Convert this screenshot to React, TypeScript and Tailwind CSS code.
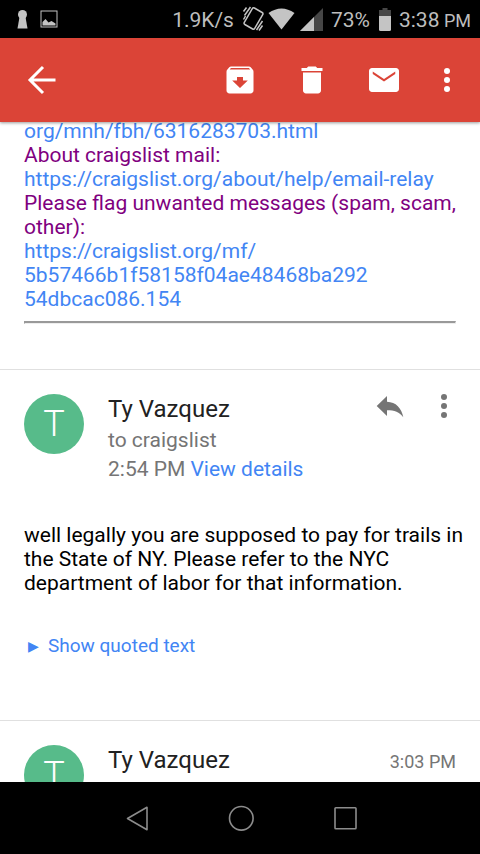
import type { ReactNode } from "react";

function StatusBar() {
  return (
    <div className="flex h-[38px] shrink-0 items-center bg-black pr-[9px] pl-4 text-[21px] text-[#bdbdbd]">
      <div className="flex items-center gap-3">
        <svg width="12" height="20" viewBox="0 0 12 20" fill="#c4c4c4" aria-hidden="true">
          <circle cx="6.500" cy="5.500" r="4.500" />
          <path d="M3.500 8h6l2 11.500h-10z" />
        </svg>
        <svg width="18" height="18" viewBox="0 0 18 18" aria-hidden="true">
          <rect x="1" y="1" width="16" height="16" fill="none" stroke="#c4c4c4" />
          <path d="M2.500 15.500v-3.500l3-3 3 3.500 3-1.500 4 2.500v2z" fill="#c4c4c4" />
        </svg>
      </div>
      <div className="ml-auto flex items-center">
        <span className="pt-[3px]">1.9K/s</span>
        <svg className="ml-2" width="24" height="28" viewBox="0 0 24 28" fill="none" stroke="#c4c4c4" strokeWidth="1.500" aria-hidden="true">
          <rect x="5.500" y="4" width="12" height="19" rx="1.500" transform="rotate(30 11.500 13.500)" />
          <path d="M8.500 2 2.500 10.500M4.500 2.500 1.500 6.500M3.500 11 1.500 14.500M20.500 16 14.500 25M20.500 20.500 17 25.500" />
        </svg>
        <svg className="ml-[2px]" width="27" height="22" viewBox="0 0 27 22" fill="#c4c4c4" aria-hidden="true">
          <path d="M13.500 21.500.5 5Q13.500-4 26.500 5z" />
        </svg>
        <svg className="ml-[5px]" width="23" height="23" viewBox="0 0 23 23" aria-hidden="true">
          <path d="M0 23 23 0v23z" fill="#464646" />
          <path d="M0 23 14 9v14z" fill="#c4c4c4" />
        </svg>
        <span className="ml-2 pt-[3px]">73%</span>
        <svg className="ml-[9px]" width="12" height="23" viewBox="0 0 12 23" aria-hidden="true">
          <path d="M3.500 0h5v2H12v6H0V2h3.500z" fill="#464646" />
          <path d="M0 8h12v13.500q0 1.500-1.500 1.500h-9Q0 23 0 21.500z" fill="#c4c4c4" />
        </svg>
        <span className="ml-2 pt-[3px]">
          3:38<span className="text-lg"> PM</span>
        </span>
      </div>
    </div>
  );
}

function ToolButton({ label, children }: { label: string; children: ReactNode }) {
  return (
    <button type="button" aria-label={label} className="flex h-full w-[72px] items-center justify-center">
      <svg width="36" height="36" viewBox="0 0 24 24" fill="currentColor">
        {children}
      </svg>
    </button>
  );
}

function Toolbar() {
  return (
    <header className="relative z-10 flex h-[84px] shrink-0 items-center bg-[#db4437] pr-[6px] pl-6 text-white shadow-[0_1px_3px_rgba(0,0,0,0.4)]">
      <button type="button" aria-label="Back" className="flex h-full w-9 items-center justify-center">
        <svg width="36" height="36" viewBox="0 0 36 36" fill="none" stroke="currentColor" strokeWidth="3">
          <path d="M19 5 6 18l13 13M6 18h25.500" />
        </svg>
      </button>
      <div className="ml-auto flex h-full">
        <ToolButton label="Archive">
          <path d="M20.54 5.23l-1.39-1.68C18.88 3.21 18.47 3 18 3H6c-.47 0-.88.21-1.16.55L3.46 5.23C3.17 5.57 3 6.02 3 6.500V19c0 1.100.9 2 2 2h14c1.100 0 2-.9 2-2V6.500c0-.48-.17-.93-.46-1.270zM12 17.300L6.800 12.300H10V10h4v2.300h3.200L12 17.300zM5.120 5l.81-1h12l.94 1z" />
        </ToolButton>
        <ToolButton label="Delete">
          <path d="M6 19c0 1.100.9 2 2 2h8c1.100 0 2-.9 2-2V7H6v12zM19 4h-3.500l-1-1h-5l-1 1H5v2h14V4z" />
        </ToolButton>
        <ToolButton label="Mark as unread">
          <path d="M20 4H4c-1.100 0-2 .9-2 2v12c0 1.100.9 2 2 2h16c1.100 0 2-.9 2-2V6c0-1.100-.9-2-2-2zm-.5 4L12 13 4.500 8V6.300l7.500 5 7.500-5V8z" />
        </ToolButton>
        <button type="button" aria-label="More options" className="flex h-full w-[54px] items-center justify-center">
          <MoreDots />
        </button>
      </div>
    </header>
  );
}

function MoreDots() {
  return (
    <svg width="8" height="26" viewBox="0 0 8 26" fill="currentColor">
      <circle cx="4" cy="4" r="3" />
      <circle cx="4" cy="13" r="3" />
      <circle cx="4" cy="22" r="3" />
    </svg>
  );
}

function Avatar() {
  return (
    <div className="flex size-[60px] shrink-0 items-center justify-center rounded-full bg-[#57bb8a] text-4xl font-light text-white">
      T
    </div>
  );
}

function NavBar() {
  return (
    <nav className="flex h-[72px] shrink-0 items-center justify-center bg-black pl-[2px] text-[#8c8c8c]">
      <button type="button" aria-label="Back" className="flex h-full w-[104px] items-center justify-center">
        <svg width="26" height="26" viewBox="0 0 26 26" fill="none" stroke="currentColor" strokeWidth="1.600" strokeLinejoin="round">
          <path d="M3.500 13.500 23 2.300v22.400z" />
        </svg>
      </button>
      <button type="button" aria-label="Home" className="flex h-full w-[104px] items-center justify-center">
        <svg width="26" height="26" viewBox="0 0 26 26" fill="none" stroke="currentColor" strokeWidth="1.600">
          <circle cx="13.300" cy="13.300" r="11.800" />
        </svg>
      </button>
      <button type="button" aria-label="Recent apps" className="flex h-full w-[104px] items-center justify-center">
        <svg width="26" height="26" viewBox="0 0 26 26" fill="none" stroke="currentColor" strokeWidth="1.600">
          <rect x="3" y="2.800" width="21" height="21" rx="0.800" />
        </svg>
      </button>
    </nav>
  );
}

export default function App() {
  return (
    <div className="flex h-dvh flex-col bg-white font-['Roboto','Noto_Sans',sans-serif]">
      <StatusBar />
      <Toolbar />
      <main className="flex min-h-0 flex-1 flex-col overflow-hidden">
        <article className="-mt-[3px] shrink-0 border-b border-[#e0e0e0] px-6 pb-[45px] text-[21px] leading-6 text-[#800080]">
          <a href="#post" className="block text-[#4285f4]">org/mnh/fbh/6316283703.html</a>
          <p>About craigslist mail:</p>
          <a href="#relay" className="block text-[#4285f4]">https://craigslist.org/about/help/email-relay</a>
          <p className="-mr-3">Please flag unwanted messages (spam, scam, other):</p>
          <a href="#flag" className="block text-[#4285f4]">
            https://craigslist.org/mf/
            <br />
            5b57466b1f58158f04ae48468ba292
            <br />
            54dbcac086.154
          </a>
          <hr className="mt-[10px] h-[3px] border-t-2 border-r border-b border-l border-t-[#999] border-r-[#eee] border-b-[#eee] border-l-[#999]" />
        </article>

        <article className="shrink-0 border-b border-[#e0e0e0] px-6 pt-6">
          <div className="flex">
            <Avatar />
            <div className="ml-6 flex-1 text-[21px] leading-[29px] text-[#757575]">
              <h2 className="mb-px text-2xl leading-[31px] text-[#212121]">Ty Vazquez</h2>
              <p>to craigslist</p>
              <p>
                2:54 PM <a href="#details" className="text-[#4285f4]">View details</a>
              </p>
            </div>
            <div className="flex h-6 items-center text-[#757575]">
              <button type="button" aria-label="Reply">
                <svg width="28" height="24" viewBox="0 0 28 24" fill="currentColor">
                  <path d="M.7 12 11 2v5.700C20 8 25.500 14 27.300 23.300 23.500 18 18.500 16.300 11 16.300V22z" />
                </svg>
              </button>
              <button type="button" aria-label="More message options" className="mr-2 ml-9">
                <MoreDots />
              </button>
            </div>
          </div>
          <p className="mt-[39px] -mr-3 text-[21px] leading-6 text-black">
            well legally you are supposed to pay for trails in the State of NY. Please refer to the NYC department of labor for that information.
          </p>
          <button type="button" className="mt-[39px] mb-[62px] flex items-center text-[19px] leading-6 text-[#4285f4]">
            <span className="w-6 pl-1 text-left font-['DejaVu_Sans',sans-serif] text-sm leading-6">▶</span>
            Show quoted text
          </button>
        </article>

        <article className="flex shrink-0 px-6 pt-6">
          <Avatar />
          <h2 className="ml-6 flex-1 text-2xl leading-[31px] text-[#212121]">Ty Vazquez</h2>
          <time className="text-lg leading-[34px] text-[#757575]">3:03 PM</time>
        </article>
      </main>
      <NavBar />
    </div>
  );
}
